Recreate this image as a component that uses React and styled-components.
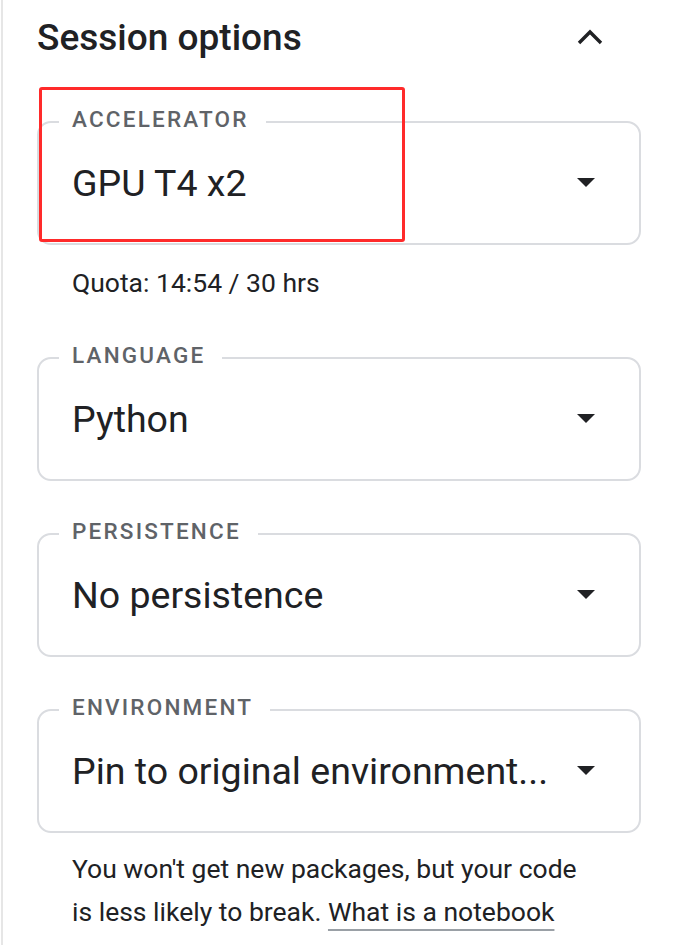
import React from 'react'
import styled, { createGlobalStyle } from 'styled-components';

const GlobalStyle = createGlobalStyle`
    html, body {
        margin: 0;
        padding: 0;
        background: #fff;
    }
    body {
        font-family: Roboto, "Liberation Sans", sans-serif;
        color: #202124;
    }
`;

const options = [
    { label: 'ACCELERATOR', value: 'GPU T4 x2', highlight: true, hint: 'Quota: 14:54 / 30 hrs' },
    { label: 'LANGUAGE', value: 'Python' },
    { label: 'PERSISTENCE', value: 'No persistence' },
    { label: 'ENVIRONMENT', value: 'Pin to original environment...' },
];

const Caret = () => (
    <svg width="18" height="10" viewBox="0 0 18 10">
        <path d="M0 0 L18 0 L9 9 Z" fill="#202124" />
    </svg>
);

const ChevronUp = () => (
    <svg width="30" height="20" viewBox="0 0 30 20">
        <path d="M4 16 L15 5 L26 16" fill="none" stroke="#202124" strokeWidth="3.4" />
    </svg>
);

export default function App() {
    return (
        <Panel>
            <GlobalStyle />
            <Header>
                <Title>Session options</Title>
                <ChevronUp />
            </Header>

            {options.map(opt => (
                <Field key={opt.label} $hasHint={!!opt.hint}>
                    <Outline>
                        <Legend><span>{opt.label}</span></Legend>
                        <SelectRow>
                            <Value>{opt.value}</Value>
                            <Caret />
                        </SelectRow>
                    </Outline>
                    {opt.highlight && <Highlight />}
                    {opt.hint && <Hint>{opt.hint}</Hint>}
                </Field>
            ))}

            <Description>
                You won't get new packages, but your code is less likely to break.{' '}
                <DocLink href="#">What is a notebook</DocLink>
            </Description>
        </Panel>
    )
}

const Panel = styled.div`
    box-sizing: border-box;
    width: 676px;
    height: 945px;
    overflow: hidden;
    border-left: 2px solid #e6e6e6;
    margin-left: 1px;
    padding: 15px 36px 0 34px;
    display: flex;
    flex-direction: column;
`;

const Header = styled.div`
    display: flex;
    align-items: center;
    justify-content: space-between;
    height: 44px;
    padding-right: 36px;
    margin-bottom: 49px;
`;

const Title = styled.h2`
    margin: 0;
    font-size: 37px;
    font-weight: 500;
    color: #202124;
`;

const Field = styled.div`
    position: relative;
    margin-bottom: ${p => p.$hasHint ? '45px' : '39px'};
`;

const Outline = styled.fieldset`
    box-sizing: border-box;
    margin: 0;
    height: 137px;
    padding: 0 33px;
    border: 2px solid #dadce0;
    border-radius: 14px;
    display: flex;
    flex-direction: column;
`;

const Legend = styled.legend`
    margin-left: -13px;
    padding: 0 17px 0 13px;
    font-size: 22.5px;
    font-weight: 500;
    letter-spacing: 2.2px;
    color: #5f6368;
    line-height: 28px;

    span {
        position: relative;
        top: -3px;
    }
`;

const SelectRow = styled.div`
    flex: 1;
    display: flex;
    align-items: center;
    justify-content: space-between;
    padding-bottom: 14px;
    padding-right: 11px;
`;

const Value = styled.span`
    font-size: 37.5px;
    color: #202124;
    white-space: nowrap;
`;

const Highlight = styled.div`
    position: absolute;
    left: 2px;
    top: -21px;
    width: 366px;
    height: 155px;
    border: 3px solid #ff2a2a;
    border-radius: 3px;
    box-sizing: border-box;
    pointer-events: none;
`;

const Hint = styled.div`
    margin-top: 22px;
    padding-left: 35px;
    font-size: 26.5px;
    line-height: 32px;
    color: #202124;
`;

const Description = styled.p`
    margin: -25px 0 0 0;
    padding-left: 35px;
    width: 515px;
    font-size: 26.5px;
    line-height: 43px;
    color: #202124;
`;

const DocLink = styled.a`
    color: #202124;
    text-decoration: underline;
    text-decoration-color: #9aa0a6;
    text-underline-offset: 8px;
    text-decoration-thickness: 2px;
`;
